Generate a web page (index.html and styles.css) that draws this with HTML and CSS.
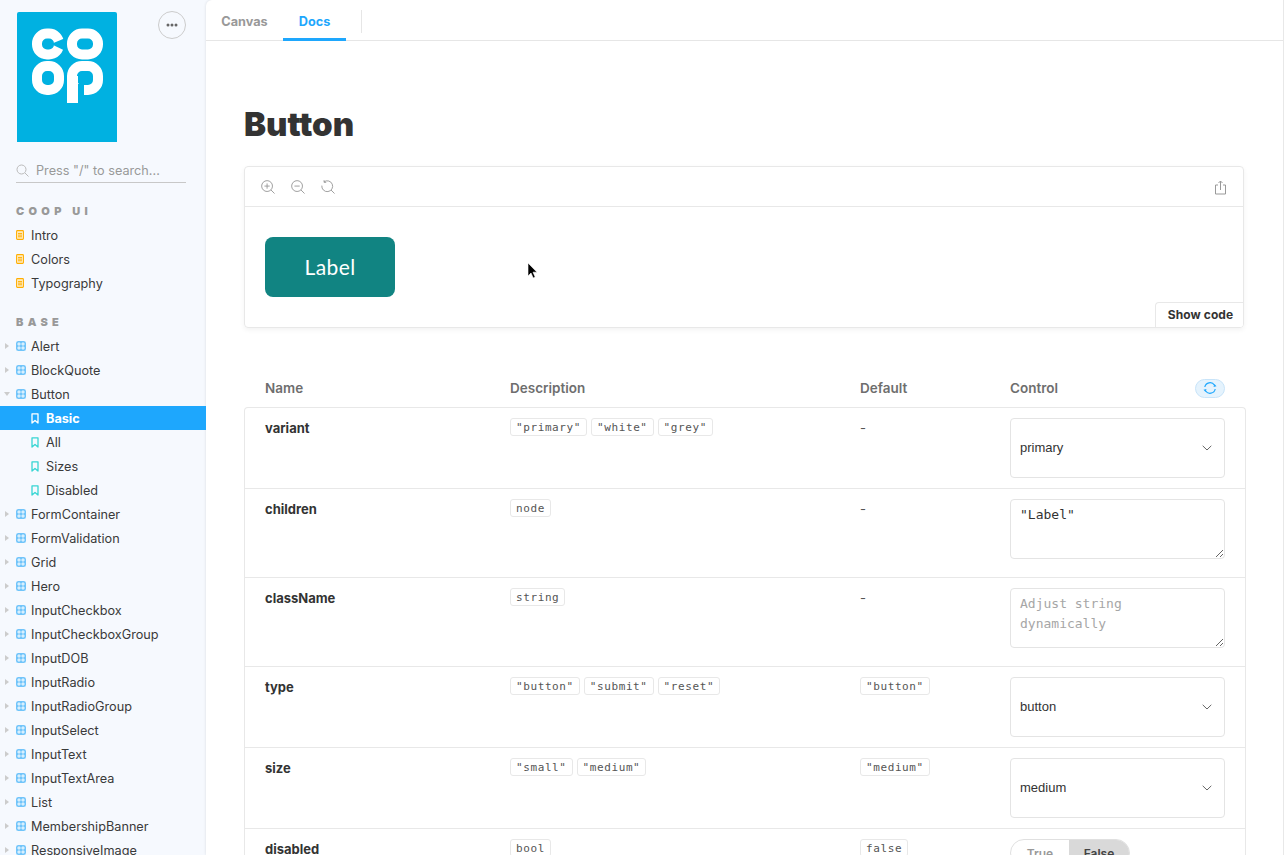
FILE: index.html
```html
<!DOCTYPE html>
<html lang="en">
<head>
<meta charset="utf-8">
<title>Button - Coop UI</title>
<link rel="stylesheet" href="styles.css">
</head>
<body>
<svg class="defs" width="0" height="0" aria-hidden="true">
  <symbol id="i-comp" viewBox="0 0 10 10">
    <rect x="0" y="0" width="10" height="10" rx="1.500" fill="#1ea7fd" opacity=".3"/>
    <rect x="1" y="1" width="8" height="8" rx="1" fill="none" stroke="#2ea9f7" stroke-width="1"/>
    <path d="M5 1v8M1 5h8" stroke="#2ea9f7" stroke-width="1"/>
    <path d="M1.500 1.500h3v3h-3zM5.500 1.500h3v3h-3zM1.500 5.500h3v3h-3zM5.500 5.500h3v3h-3z" fill="#d8effd"/>
  </symbol>
  <symbol id="i-story" viewBox="0 0 8 11">
    <path d="M1 .8h6v9.200L4 7.400 1 10z" fill="none" stroke="currentColor" stroke-width="1.300" stroke-linejoin="round"/>
  </symbol>
  <symbol id="i-doc" viewBox="0 0 8 10">
    <rect x=".6" y=".6" width="6.800" height="8.800" rx=".8" fill="#fff0cf" stroke="#ffae00" stroke-width="1.100"/>
    <path d="M2 3.400h4M2 5.100h4M2 6.800h4" stroke="#ffae00" stroke-width="1"/>
  </symbol>
  <symbol id="i-chevron" viewBox="0 0 10 6">
    <path d="M.7.8 5 5 9.300.8" fill="none" stroke="#666" stroke-width="1"/>
  </symbol>
</svg>

<div class="app">
  <aside class="sidebar">
    <div class="brand">
      <svg class="logo" width="100" height="130" viewBox="17 12 100 130" role="img" aria-label="Co-op">
        <rect x="17" y="12" width="100" height="130" fill="#00b1e1"/>
        <g fill="none" stroke="#fff" stroke-width="10">
          <rect x="37" y="33.500" width="22" height="21" rx="10"/>
          <rect x="72" y="33.500" width="26" height="21" rx="10"/>
          <rect x="37" y="66" width="22" height="24" rx="10"/>
          <rect x="72" y="66" width="26" height="24" rx="10"/>
        </g>
        <path d="M51 44 65.500 38v13z" fill="#00b1e1"/>
        <rect x="78" y="84" width="6" height="13" fill="#00b1e1"/>
        <rect x="67" y="76" width="11" height="27" fill="#fff"/>
      </svg>
      <button class="more" type="button" aria-label="More">
        <svg width="12" height="4" viewBox="0 0 12 4"><circle cx="2" cy="2" r="1.500" fill="#666"/><circle cx="6" cy="2" r="1.500" fill="#666"/><circle cx="10" cy="2" r="1.500" fill="#666"/></svg>
      </button>
    </div>

    <label class="search">
      <svg width="13" height="13" viewBox="0 0 13 13"><circle cx="5.500" cy="5.500" r="4.500" fill="none" stroke="#bbb"/><path d="m9 9 3.500 3.500" stroke="#bbb"/></svg>
      <span>Press "/" to search...</span>
    </label>

    <h2 class="section">COOP UI</h2>
    <ul class="tree">
      <li class="row"><svg class="ic-doc"><use href="#i-doc"/></svg>Intro</li>
      <li class="row"><svg class="ic-doc"><use href="#i-doc"/></svg>Colors</li>
      <li class="row"><svg class="ic-doc"><use href="#i-doc"/></svg>Typography</li>
    </ul>

    <h2 class="section">BASE</h2>
    <ul class="tree">
      <li class="row"><i class="arrow"></i><svg class="ic"><use href="#i-comp"/></svg>Alert</li>
      <li class="row"><i class="arrow"></i><svg class="ic"><use href="#i-comp"/></svg>BlockQuote</li>
      <li class="row"><i class="arrow arrow-open"></i><svg class="ic"><use href="#i-comp"/></svg>Button</li>
      <li class="row row-story row-active"><svg class="ic-story"><use href="#i-story"/></svg>Basic</li>
      <li class="row row-story"><svg class="ic-story"><use href="#i-story"/></svg>All</li>
      <li class="row row-story"><svg class="ic-story"><use href="#i-story"/></svg>Sizes</li>
      <li class="row row-story"><svg class="ic-story"><use href="#i-story"/></svg>Disabled</li>
      <li class="row"><i class="arrow"></i><svg class="ic"><use href="#i-comp"/></svg>FormContainer</li>
      <li class="row"><i class="arrow"></i><svg class="ic"><use href="#i-comp"/></svg>FormValidation</li>
      <li class="row"><i class="arrow"></i><svg class="ic"><use href="#i-comp"/></svg>Grid</li>
      <li class="row"><i class="arrow"></i><svg class="ic"><use href="#i-comp"/></svg>Hero</li>
      <li class="row"><i class="arrow"></i><svg class="ic"><use href="#i-comp"/></svg>InputCheckbox</li>
      <li class="row"><i class="arrow"></i><svg class="ic"><use href="#i-comp"/></svg>InputCheckboxGroup</li>
      <li class="row"><i class="arrow"></i><svg class="ic"><use href="#i-comp"/></svg>InputDOB</li>
      <li class="row"><i class="arrow"></i><svg class="ic"><use href="#i-comp"/></svg>InputRadio</li>
      <li class="row"><i class="arrow"></i><svg class="ic"><use href="#i-comp"/></svg>InputRadioGroup</li>
      <li class="row"><i class="arrow"></i><svg class="ic"><use href="#i-comp"/></svg>InputSelect</li>
      <li class="row"><i class="arrow"></i><svg class="ic"><use href="#i-comp"/></svg>InputText</li>
      <li class="row"><i class="arrow"></i><svg class="ic"><use href="#i-comp"/></svg>InputTextArea</li>
      <li class="row"><i class="arrow"></i><svg class="ic"><use href="#i-comp"/></svg>List</li>
      <li class="row"><i class="arrow"></i><svg class="ic"><use href="#i-comp"/></svg>MembershipBanner</li>
      <li class="row"><i class="arrow"></i><svg class="ic"><use href="#i-comp"/></svg>ResponsiveImage</li>
    </ul>
  </aside>

  <main class="panel">
    <nav class="tabs">
      <a class="tab">Canvas</a>
      <a class="tab tab-active">Docs</a>
      <span class="tab-sep"></span>
    </nav>

    <div class="doc">
      <h1 class="title">Button</h1>

      <section class="preview">
        <div class="toolbar">
          <svg class="tool" viewBox="0 0 15 15"><circle cx="6.500" cy="6.500" r="5.800" fill="none" stroke="#999"/><path d="m10.700 10.700 3.800 3.800M6.500 3.700v5.600M3.700 6.500h5.600" stroke="#999" fill="none"/></svg>
          <svg class="tool" viewBox="0 0 15 15"><circle cx="6.500" cy="6.500" r="5.800" fill="none" stroke="#999"/><path d="m10.700 10.700 3.800 3.800M3.700 6.500h5.600" stroke="#999" fill="none"/></svg>
          <svg class="tool" viewBox="0 0 15 15"><path d="M3.200 2A5.800 5.800 0 1 1 .9 6M3.300 .2v2.300h2.300M10.700 10.700l3.800 3.800" stroke="#999" fill="none"/></svg>
          <svg class="tool tool-share" viewBox="0 0 13 15"><path d="M4 5H1.500v9h10V5H9M6.500 10V1M4.500 3l2-2 2 2" stroke="#999" fill="none"/></svg>
        </div>
        <div class="stage">
          <button class="demo" type="button">Label</button>
          <button class="showcode" type="button">Show code</button>
        </div>
      </section>

      <div class="thead">
        <span class="c-name">Name</span>
        <span class="c-desc">Description</span>
        <span class="c-def">Default</span>
        <span class="c-ctl">Control
          <button class="reset" type="button" aria-label="Reset">
            <svg width="14" height="14" viewBox="0 0 14 14"><path d="M1.800 6A5.300 5.300 0 0 1 11.500 4.200M12.200 8A5.300 5.300 0 0 1 2.500 9.800" fill="none" stroke="#1ea7fd" stroke-width="1.200"/><path d="M13.500 5.300 10.500 6l1-3zM.5 8.700 3.500 8l-1 3z" fill="#1ea7fd"/></svg>
          </button>
        </span>
      </div>

      <div class="tbody">
        <div class="trow">
          <span class="c-name pname">variant</span>
          <span class="c-desc"><code class="tag">"primary"</code><code class="tag">"white"</code><code class="tag">"grey"</code></span>
          <span class="c-def dash">-</span>
          <span class="c-ctl"><span class="select"><select><option>primary</option></select><svg class="chev"><use href="#i-chevron"/></svg></span></span>
        </div>
        <div class="trow trow-area">
          <span class="c-name pname">children</span>
          <span class="c-desc"><code class="tag">node</code></span>
          <span class="c-def dash">-</span>
          <span class="c-ctl"><textarea class="area">"Label"</textarea></span>
        </div>
        <div class="trow trow-area">
          <span class="c-name pname">className</span>
          <span class="c-desc"><code class="tag">string</code></span>
          <span class="c-def dash">-</span>
          <span class="c-ctl"><textarea class="area" placeholder="Adjust string dynamically"></textarea></span>
        </div>
        <div class="trow">
          <span class="c-name pname">type</span>
          <span class="c-desc"><code class="tag">"button"</code><code class="tag">"submit"</code><code class="tag">"reset"</code></span>
          <span class="c-def"><code class="tag">"button"</code></span>
          <span class="c-ctl"><span class="select"><select><option>button</option></select><svg class="chev"><use href="#i-chevron"/></svg></span></span>
        </div>
        <div class="trow">
          <span class="c-name pname">size</span>
          <span class="c-desc"><code class="tag">"small"</code><code class="tag">"medium"</code></span>
          <span class="c-def"><code class="tag">"medium"</code></span>
          <span class="c-ctl"><span class="select"><select><option>medium</option></select><svg class="chev"><use href="#i-chevron"/></svg></span></span>
        </div>
        <div class="trow">
          <span class="c-name pname">disabled</span>
          <span class="c-desc"><code class="tag">bool</code></span>
          <span class="c-def"><code class="tag">false</code></span>
          <span class="c-ctl"><span class="toggle"><span class="opt">True</span><span class="opt opt-on">False</span></span></span>
        </div>
      </div>
    </div>
  </main>
</div>

<svg class="cursor" width="12" height="18" viewBox="0 0 12 18" aria-hidden="true"><path d="M1 1v13l3-3 2.200 5 2-1-2.200-4.800H10z" fill="#000" stroke="#fff" stroke-width=".6"/></svg>
</body>
</html>
```
FILE: styles.css
```css
* { box-sizing: border-box; }
html, body { margin: 0; height: 100%; overflow: hidden; }
body { background: #f6f9fe; color: #333; font-family: Inter, "Liberation Sans", sans-serif; }
.defs { position: absolute; }
.app { display: flex; width: 1284px; height: 855px; }

/* sidebar */
.sidebar { flex: 0 0 206px; padding-top: 11px; overflow: hidden; }
.brand { display: flex; justify-content: space-between; align-items: flex-start; padding: 0 20px 0 17px; }
.logo { display: block; margin-top: 1px; border-radius: 2px 2px 0 0; }
.more { width: 28px; height: 28px; padding: 0; border: 1px solid #ccc; border-radius: 50%; background: transparent; display: flex; align-items: center; justify-content: center; }
.search { display: flex; align-items: center; gap: 7px; margin: 19px 20px 0 16px; height: 22px; border-bottom: 1px solid #c8c8c8; font-size: 12.700px; color: #999; padding-bottom: 2px; }
.section { margin: 21px 0 5px; padding-left: 16px; font-size: 11px; font-weight: 900; letter-spacing: 4.300px; color: #999; line-height: 14px; }
.tree { list-style: none; margin: 0; padding: 0; }
.tree + .section { margin-top: 20px; }
.row { position: relative; display: flex; align-items: center; height: 24px; padding-left: 16px; font-size: 12.700px; color: #3a3a3a; }
.ic { width: 10px; height: 10px; margin-right: 5px; flex: none; }
.ic-doc { width: 8px; height: 10px; margin-right: 7px; flex: none; }
.ic-story { width: 8px; height: 11px; margin-right: 7px; flex: none; color: #37d5d3; }
.row-story { padding-left: 31px; }
.row-active { background: #1ea7fd; color: #fff; font-weight: 700; }
.row-active .ic-story { color: #fff; }
.arrow { position: absolute; left: 5px; top: 9px; width: 0; height: 0; border-left: 4px solid #ccc; border-top: 3.500px solid transparent; border-bottom: 3.500px solid transparent; }
.arrow-open { left: 4px; top: 10px; border-top: 4px solid #ccc; border-left: 3.500px solid transparent; border-right: 3.500px solid transparent; border-bottom: 0; }

/* main panel */
.panel { flex: 0 0 1078px; height: 855px; background: #fff; border-radius: 6px 0 0 0; border-right: 1px solid #e8e8e8; box-shadow: 0 0 3px rgba(0,0,0,.12); overflow: hidden; }
.tabs { display: flex; align-items: stretch; height: 41px; border-bottom: 1px solid #e6e6e6; }
.tab { display: flex; align-items: center; justify-content: center; flex: none; height: 41px; padding-top: 4px; font-size: 12.700px; font-weight: 700; color: #999; border-bottom: 3px solid transparent; }
.tab:first-child { width: 77px; }
.tab-active { width: 63px; color: #1ea7fd; border-bottom-color: #1ea7fd; }
.tab-sep { width: 1px; height: 23px; margin: 10px 0 0 15px; background: #e6e6e6; }

.doc { padding: 0 37px 0 38px; }
.title { margin: 63px 0 0; font-size: 33px; line-height: 40px; font-weight: 900; color: #333; }
.preview { margin-top: 22px; width: 1000px; height: 162px; border: 1px solid #e8e8e8; border-radius: 4px; box-shadow: 0 2px 5px rgba(0,0,0,.05); overflow: hidden; }
.toolbar { display: flex; align-items: center; gap: 16px; height: 40px; padding: 1px 16px 0; border-bottom: 1px solid #e8e8e8; }
.tool { width: 14px; height: 14px; flex: none; }
.tool-share { width: 13px; height: 15px; margin-left: auto; margin-right: 0; }
.stage { position: relative; padding: 30px 20px; height: 120px; }
.demo { display: block; width: 130px; height: 60px; padding: 0 0 2px; border: 0; border-radius: 8px; background: #118482; color: #fff; font-family: Lato, sans-serif; font-size: 21px; letter-spacing: .4px; }
.showcode { position: absolute; right: 0; bottom: 0; height: 25px; width: 88px; padding: 0 0 2px 2px; background: #fff; border: 1px solid #e8e8e8; border-width: 1px 0 0 1px; border-radius: 4px 0 0 0; font-family: Inter, sans-serif; font-size: 12px; font-weight: 700; letter-spacing: .1px; color: #333; }

/* table */
.thead, .trow { display: grid; grid-template-columns: 245px 350px 150px 215px; }
.thead { width: 1002px; margin-top: 41px; padding-left: 21px; height: 38px; align-items: center; font-size: 13.500px; font-weight: 600; color: #6e6e6e; }
.thead .c-ctl { display: flex; align-items: center; justify-content: space-between; }
.reset { display: flex; align-items: center; justify-content: center; width: 30px; height: 19px; padding: 0; background: #e5f3fd; border: 1px solid #c8e4f9; border-radius: 10px; }
.tbody { width: 1002px; border: 1px solid #e8e8e8; border-radius: 4px 4px 0 0; border-bottom: 0; }
.trow { padding: 10px 0 10px 20px; border-bottom: 1px solid #e8e8e8; font-size: 13px; }
.trow-area { padding-bottom: 18px; }
.pname { font-size: 13px; font-weight: 700; color: #333; line-height: 20px; }
.dash { line-height: 20px; color: #555; }
.tag { display: inline-block; margin-right: 4px; height: 18px; padding: 0 5px; border: 1px solid #e8e8e8; border-radius: 3px; font-family: "DejaVu Sans Mono", monospace; font-size: 11px; line-height: 17px; letter-spacing: .6px; color: #555; vertical-align: top; white-space: nowrap; }
.c-desc, .c-def { white-space: nowrap; }
.select { position: relative; display: block; width: 215px; height: 60px; }
.select select { display: block; width: 100%; height: 100%; padding: 0 9px 2px; appearance: none; background: #fff; border: 1px solid #e4e4e4; border-radius: 4px; font-family: "Liberation Sans", Arial, sans-serif; font-size: 13px; color: #333; }
.chev { position: absolute; right: 13px; top: 27px; width: 10px; height: 6px; }
.area { display: block; width: 215px; height: 60px; padding: 5px 9px; background: #fff; border: 1px solid #e4e4e4; border-radius: 4px; font-family: "DejaVu Sans Mono", monospace; font-size: 13px; line-height: 20px; color: #333; }
.area::placeholder { color: #a6a6a6; opacity: 1; }
.toggle { display: flex; width: 120px; height: 28px; border: 1px solid #e0e0e0; border-radius: 14px; overflow: hidden; font-size: 12px; font-weight: 600; }
.opt { flex: 1; display: flex; align-items: center; justify-content: center; color: #999; }
.opt-on { flex: 0 0 60px; background: #d9d9d9; color: #444; }

.cursor { position: absolute; left: 527px; top: 262px; }
```
